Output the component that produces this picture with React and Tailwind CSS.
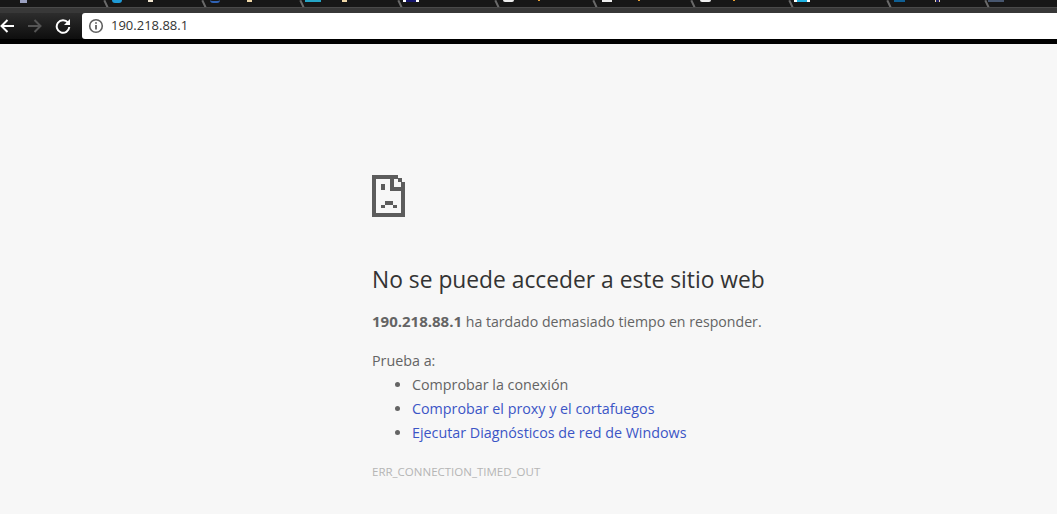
const tabs = [
  { w: 98, items: [[14, 7, 3, "bg-[#9aa0c0]", ""]] },
  { w: 98, items: [[8, 10, 3, "bg-[#1e9ad6]", "rounded-b-full"], [26, 5, 2, "bg-[#f2e6d0]", ""]] },
  { w: 98, items: [[8, 10, 3, "border-b-2 border-[#2f62b5]", "rounded-b-full"], [27, 5, 2, "bg-[#f0d8a8]", ""]] },
  { w: 98, items: [[5, 16, 2, "bg-[#25a5c6]", ""], [21, 5, 2, "bg-[#f0d8a8]", ""]] },
  { w: 97, items: [[5, 16, 2, "bg-[#16166e]", "border-x-[3px] border-white"]] },
  { w: 98, items: [[8, 11, 2, "bg-[#eeeeee]", "rounded-b-full"], [24, 2, 1, "bg-[#e8a030]", ""]] },
  { w: 98, items: [[9, 10, 2, "bg-[#eeeeee]", ""], [26, 2, 1, "bg-[#e8a030]", ""]] },
  { w: 98, items: [[9, 11, 2, "bg-[#eeeeee]", "rounded-b-full"], [22, 2, 1, "bg-[#e8a030]", ""]] },
  { w: 98, items: [[5, 16, 2, "bg-[#1fb0e0]", "border-x-[3px] border-white"]] },
  { w: 98, items: [[7, 11, 2, "bg-[#0f5f94]", ""], [30, 5, 2, "bg-[#22226e]", "border-x border-[#f0d8a8]"]] },
  { w: 72, items: [[3, 16, 2, "bg-[#47566e]", ""]] },
];

function SadPage() {
  return (
    <svg width="33" height="42" viewBox="0 0 33 42" shapeRendering="crispEdges" className="block" fill="#5c5c5c">
      <path d="M0 0h26v4H4v34h25V16H18V0h4v12h11v30H0z" />
      <path d="M26 3h4v4h-4zM29 7h4v5h-4z" />
      <path d="M9 9h4v6H9z" />
      <path d="M13 26h8v4h-8zM9 30h4v3H9zM21 30h4v3h-4z" />
    </svg>
  );
}

export default function App() {
  return (
    <div className="h-[514px] w-full overflow-hidden bg-[#f7f7f7] font-['Open_Sans',sans-serif] text-[#646464]">
      <header className="h-[44px] bg-black">
        <div className="flex h-[7px] overflow-hidden bg-[#171717] pl-[6px]">
          {tabs.map((t, i) => (
            <div key={i} className="relative h-[7px] shrink-0" style={{ width: t.w }}>
              <div className="flex items-start">
                {t.items.map(([gap, w, h, c, extra], j) => (
                  <div key={j} className={`shrink-0 ${c} ${extra}`} style={{ marginLeft: gap, width: w, height: h }} />
                ))}
              </div>
              {i < 10 && <div className="absolute top-0 right-[-2px] h-[8px] w-[1.5px] rotate-[-25deg] bg-[#6a6a6a]" />}
            </div>
          ))}
        </div>
        <div className="h-[6px] border-t border-[#4a4a4a] bg-[#383838]" />
        <div className="flex h-[26px] items-center bg-gradient-to-b from-[#2d2d2d] to-[#0e0e0e]">
          <svg width="16" height="16" viewBox="0 0 16 16" fill="none" strokeWidth="2" className="ml-[-1px] text-white" stroke="currentColor"><path d="M15 8H3M8.5 2 2.5 8l6 6" /></svg>
          <svg width="16" height="16" viewBox="0 0 16 16" fill="none" strokeWidth="2" className="ml-[12px] text-[#555]" stroke="currentColor"><path d="M1 8h12M7.5 2l6 6-6 6" /></svg>
          <svg width="16" height="16" viewBox="0 0 16 16" fill="none" strokeWidth="2" className="ml-[12px] text-white" stroke="currentColor"><path d="M13 4.6A6.3 6.3 0 1 0 14.3 9" /><path d="M15 1v6H9z" fill="currentColor" stroke="none" /></svg>
          <div className="ml-[11px] flex h-[26px] flex-1 items-center rounded-l-[3px] bg-white pl-[6px]">
            <svg width="16" height="16" viewBox="0 0 16 16" fill="none" stroke="#5f5f5f" strokeWidth="1.6"><circle cx="8" cy="8" r="6.3" /><path d="M8 7v4.6M8 4.2v1.6" strokeWidth="1.8" /></svg>
            <span className="ml-[7px] text-[13px] text-[#333]">190.218.88.1</span>
          </div>
        </div>
        <div className="h-[5px] bg-black" />
      </header>
      <main className="ml-[372px] w-[440px] pt-[131px]">
        <SadPage />
        <h1 className="mt-[47px] text-[22.8px] leading-[32px] font-normal text-[#333]">No se puede acceder a este sitio web</h1>
        <p className="mt-[13px] text-[14.15px] leading-[24px]"><strong className="text-[15px] font-bold">190.218.88.1</strong> ha tardado demasiado tiempo en responder.</p>
        <p className="mt-[15px] text-[14.3px] leading-[24px]">Prueba a:</p>
        <ul className="list-disc pl-[40px] text-[14.3px] leading-[24px]">
          <li>Comprobar la conexión</li>
          <li><span className="text-[#3b55c6]">Comprobar el proxy y el cortafuegos</span></li>
          <li><span className="text-[#3b55c6]">Ejecutar Diagnósticos de red de Windows</span></li>
        </ul>
        <p className="mt-[19px] text-[11.5px] leading-[16px] text-[#b5b5b5]">ERR_CONNECTION_TIMED_OUT</p>
      </main>
    </div>
  );
}
